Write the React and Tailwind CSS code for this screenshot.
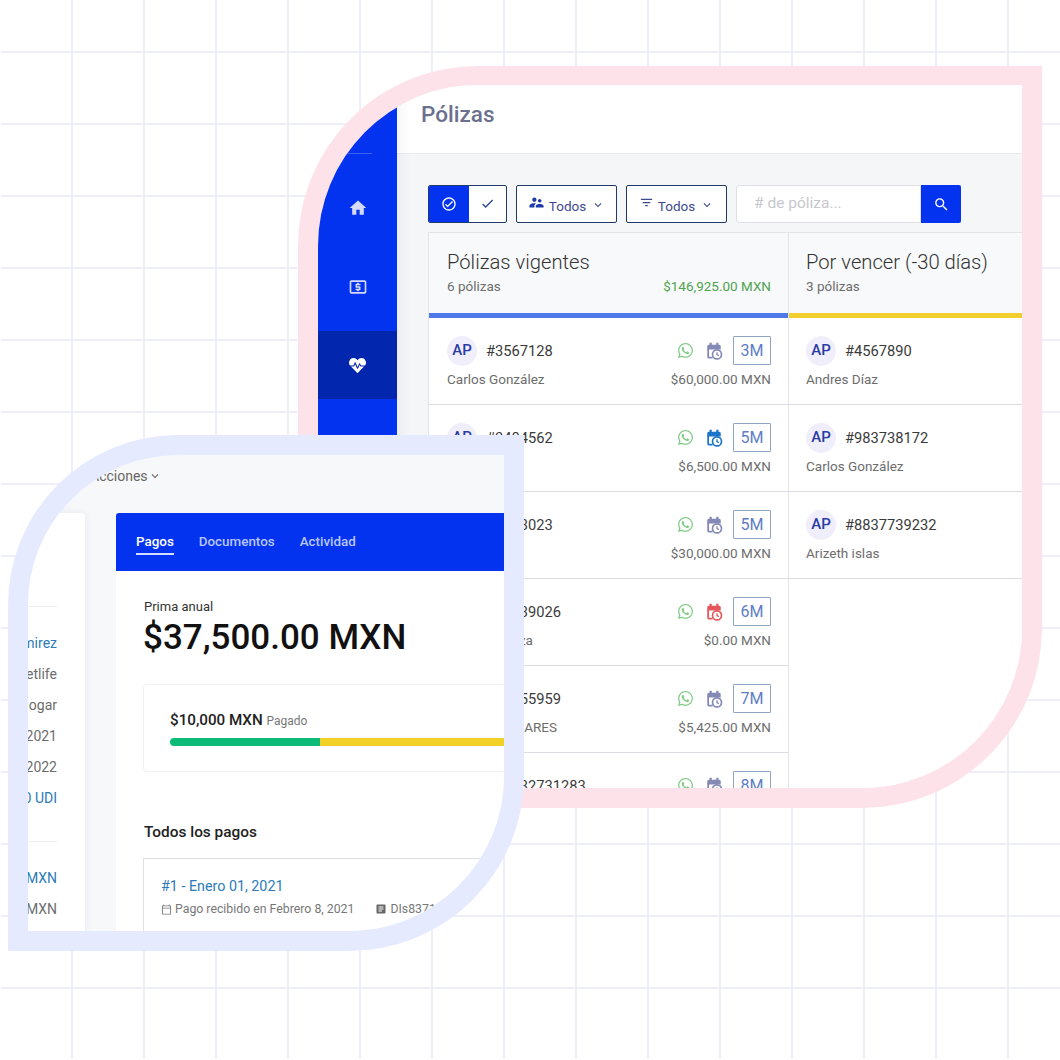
import React from 'react';
import { FaHeartbeat, FaWhatsapp } from 'react-icons/fa';
import {
  MdArticle,
  MdCheck,
  MdFilterList,
  MdHome,
  MdKeyboardArrowDown,
  MdLocalAtm,
  MdOutlineCheckCircle,
  MdOutlineCalendarToday,
  MdSearch,
  MdSupervisorAccount,
} from 'react-icons/md';

const vigentes = [
  { id: '#3567128', name: 'Carlos González', amount: '$60,000.00 MXN', term: '3M', cal: 'text-[#8489b6]' },
  { id: '#3484562', name: 'Juan Pérez', amount: '$6,500.00 MXN', term: '5M', cal: 'text-[#1c74c9]' },
  { id: '#3453023', name: 'Ana Torres', amount: '$30,000.00 MXN', term: '5M', cal: 'text-[#8489b6]' },
  { id: '#12339026', name: 'María Esparza', amount: '$0.00 MXN', term: '6M', cal: 'text-[#e4575c]' },
  { id: '#12355959', name: 'ROSA M. LINARES', amount: '$5,425.00 MXN', term: '7M', cal: 'text-[#8489b6]' },
  { id: '#98732731283', name: 'Luis Mora', amount: '$2,000.00 MXN', term: '8M', cal: 'text-[#8489b6]' },
];

const porVencer = [
  { id: '#4567890', name: 'Andres Díaz' },
  { id: '#983738172', name: 'Carlos González' },
  { id: '#8837739232', name: 'Arizeth islas' },
];

const CalendarClockIcon = ({ className }) => (
  <svg className={className} width="18" height="18" viewBox="0 0 24 24" fill="none">
    <path fill="currentColor" d="M6 1h3v2.5h6V1h3v2.5h1a2 2 0 0 1 2 2V10H3V5.500a2 2 0 0 1 2-2h1z" />
    <path stroke="currentColor" strokeWidth="2.400" d="M4.200 9v10.500a1.300 1.300 0 0 0 1.300 1.300H10" />
    <circle cx="16" cy="16.500" r="6" fill="#fff" stroke="currentColor" strokeWidth="2.200" />
    <path stroke="currentColor" strokeWidth="1.700" d="M16 13.500v3.300l2.400 1.300" />
  </svg>
);

const Avatar = () => (
  <span className="flex h-[30px] w-[30px] items-center justify-center rounded-full bg-[#efeefa] text-[15px] font-medium text-[#2a3ba6]">
    AP
  </span>
);

const ToolbarButton = ({ icon, children }) => (
  <button className="flex h-[38px] w-[101px] items-center justify-center rounded-[2px] border border-[#1f3a68] bg-white text-[13.5px] text-[#3d4a8f]">
    <span className="mb-[3px]">{icon}</span>
    <span className="ml-[4px] mt-[4px]">{children}</span>
    <MdKeyboardArrowDown className="ml-[5px] mt-[1px] text-[#3d4a8f]" size={14} />
  </button>
);

const PolicyRow = ({ policy }) => (
  <div className="flex h-[87px] shrink-0 flex-col border-b border-[#dcdde2] pl-[18px] pr-[17px] pt-[18px]">
    <div className="flex h-[29px] items-center">
      <Avatar />
      <span className="ml-[9px] mt-[1px] text-[14.7px] text-[#3a3a3a]">{policy.id}</span>
      <div className="ml-auto flex items-center">
        <FaWhatsapp className="text-[#7fcb85]" size={17} />
        <CalendarClockIcon className={`ml-[11px] ${policy.cal}`} />
        <span className="ml-[10px] flex h-[29px] w-[38px] items-center justify-center rounded-[1px] border border-[#8ea4bf] text-[16px] text-[#5d7dc6]">
          {policy.term}
        </span>
      </div>
    </div>
    <div className="mt-[5px] flex items-center justify-between text-[13.5px] leading-[18px] text-[#6d6d6d]">
      <span>{policy.name}</span>
      <span>{policy.amount}</span>
    </div>
  </div>
);

const ShortRow = ({ policy }) => (
  <div className="flex h-[87px] shrink-0 flex-col border-b border-[#dcdde2] pl-[17px] pt-[18px]">
    <div className="flex h-[29px] items-center">
      <Avatar />
      <span className="ml-[9px] mt-[1px] text-[14.7px] text-[#3a3a3a]">{policy.id}</span>
    </div>
    <div className="mt-[5px] text-[13.5px] leading-[18px] text-[#6d6d6d]">{policy.name}</div>
  </div>
);

const PolizasWindow = () => (
  <div className="absolute left-[298px] top-[66px] flex h-[742px] w-[744px] overflow-hidden rounded-tl-[180px] rounded-br-[180px] border-[20px] border-t-[19px] border-[#fde3e9] bg-white">
    {/* sidebar */}
    <aside className="relative flex w-[79px] shrink-0 flex-col bg-[#0433f0] shadow-[4px_0_12px_rgba(30,40,90,0.05)]">
      <div className="ml-[27px] mt-[68px] h-px w-[27px] bg-[#3d62f5]" />
      <nav className="mt-[19px] flex flex-col gap-[11px] text-[#d5dafc]">
        <div className="flex h-[68px] items-center justify-center pt-[2px]"><MdHome size={20} /></div>
        <div className="flex h-[68px] items-center justify-center pt-[2px]"><MdLocalAtm size={20} /></div>
        <div className="flex h-[68px] items-center justify-center bg-[#0226ad] text-white"><FaHeartbeat size={17} /></div>
      </nav>
    </aside>

    <main className="flex min-w-0 flex-1 flex-col bg-[#f5f6f8]">
      <header className="h-[69px] shrink-0 border-b border-[#e9eaee] bg-white pl-[24px] pt-[13px] text-[22.5px] font-medium leading-[32px] text-[#6c708f]">
        Pólizas
      </header>

      <div className="mt-[31px] flex h-[38px] shrink-0 pl-[31px]">
        <div className="flex h-[38px] w-[79px] overflow-hidden rounded-[2px] border border-[#1f3a68] bg-white">
          <span className="flex w-[40px] items-center justify-center bg-[#0433f0] pb-[1px] text-white"><MdOutlineCheckCircle size={16} /></span>
          <span className="flex flex-1 items-center justify-center pb-[1px] text-[#2c4a86]"><MdCheck size={15} /></span>
        </div>
        <div className="ml-[9px]"><ToolbarButton icon={<MdSupervisorAccount className="text-[#1d3aa8]" size={17} />}>Todos</ToolbarButton></div>
        <div className="ml-[9px]"><ToolbarButton icon={<MdFilterList className="text-[#3d4a8f]" size={15} />}>Todos</ToolbarButton></div>
        <div className="ml-[9px] flex h-[38px] w-[225px]">
          <div className="flex flex-1 items-center rounded-l-[3px] border border-[#dddfe4] bg-white pl-[17px] text-[15.500px] text-[#c6c8cc]">
            # de póliza...
          </div>
          <span className="flex w-[40px] items-center justify-center rounded-r-[2px] bg-[#0433f0] text-white"><MdSearch size={17} /></span>
        </div>
      </div>

      {/* board */}
      <div className="ml-[31px] mt-[9px] flex min-h-0 flex-1">
        <section className="flex w-[360px] shrink-0 flex-col overflow-hidden border-l border-t border-[#e3e4e8] bg-white">
          <div className="h-[80px] shrink-0 bg-[#f8f9fa] pl-[18px] pr-[17px] pt-[16px]">
            <h2 className="text-[20.200px] font-light leading-[26px] text-[#333]">Pólizas vigentes</h2>
            <div className="mt-[3px] flex justify-between text-[13.5px] leading-[16px]">
              <span className="text-[#6d6d6d]">6 pólizas</span>
              <span className="text-[#4fa34f]">$146,925.00 MXN</span>
            </div>
          </div>
          <div className="h-[5px] shrink-0 bg-[#4f78e8]" />
          {vigentes.map((policy) => <PolicyRow key={policy.id} policy={policy} />)}
        </section>
        <section className="flex w-[360px] shrink-0 flex-col overflow-hidden border-l border-t border-[#e3e4e8] bg-white">
          <div className="h-[80px] shrink-0 bg-[#f8f9fa] pl-[17px] pt-[16px]">
            <h2 className="text-[20.200px] font-light leading-[26px] text-[#333]">Por vencer (-30 días)</h2>
            <div className="mt-[3px] text-[13.5px] leading-[16px] text-[#6d6d6d]">3 pólizas</div>
          </div>
          <div className="h-[5px] shrink-0 bg-[#f2cf2f]" />
          {porVencer.map((policy) => <ShortRow key={policy.id} policy={policy} />)}
        </section>
      </div>
    </main>
  </div>
);

const SideValue = ({ children, link }) => (
  <div className={`h-[31px] whitespace-nowrap text-right text-[14px] leading-[31px] ${link ? 'text-[#2b7bb9]' : 'text-[#6d6d6d]'}`}>
    {children}
  </div>
);

const PagosWindow = () => (
  <div className="absolute left-[8px] top-[435px] h-[516px] w-[516px] overflow-hidden rounded-tl-[170px] rounded-br-[175px] border-[20px] border-[#e5eafe] bg-[#f7f8fa]">
    <div className="ml-[62px] flex h-[58px] items-start pt-[12px] text-[14px] leading-[18px] text-[#666]">
      Acciones
      <MdKeyboardArrowDown className="mt-[2px]" size={14} />
    </div>
    <div className="flex h-[418px]">
      {/* policy details, cut by the frame on the left */}
      <div className="ml-[-143px] w-[200px] shrink-0 rounded-tr-[4px] bg-white pr-[28px] pt-[93px] shadow-[0_0_8px_rgba(30,40,90,0.08)]">
        <div className="h-px bg-[#eeeff2]" />
        <div className="mt-[21px]">
          <SideValue link>Juan Ramirez</SideValue>
          <SideValue>Metlife</SideValue>
          <SideValue>Hogar</SideValue>
          <SideValue>Enero 01, 2021</SideValue>
          <SideValue>Enero 01, 2022</SideValue>
          <SideValue link>$1,500.00 UDI</SideValue>
        </div>
        <div className="mt-[27px] h-px bg-[#eeeff2]" />
        <div className="mt-[21px]">
          <SideValue link>$37,500 MXN</SideValue>
          <SideValue>$27,500 MXN</SideValue>
        </div>
      </div>

      <div className="ml-[31px] w-[500px] shrink-0 overflow-hidden rounded-t-[3px] bg-white">
        <nav className="flex h-[58px] items-start bg-[#0433f0] pl-[20px] pt-[20px] text-[13.4px] font-medium leading-[18px] text-[#b9c6fd]">
          <span className="border-b-[2px] border-[#d5dcfe] pb-[2px] text-white">Pagos</span>
          <span className="ml-[25px]">Documentos</span>
          <span className="ml-[25px]">Actividad</span>
        </nav>
        <div className="pl-[27px]">
          <p className="mt-[28px] pl-px text-[13px] leading-[16px] text-[#333]">Prima anual</p>
          <p className="mt-[2px] text-[35px] font-medium leading-[42px] text-[#111]">$37,500.00 MXN</p>

          <div className="mt-[25px] h-[88px] rounded-[4px] border border-[#f0f1f3] pl-[26px] pt-[25px]">
            <p className="text-[15.2px] font-medium leading-[20px] text-[#222]">
              $10,000 MXN <span className="text-[12px] font-normal text-[#777]">Pagado</span>
            </p>
            <div className="mt-[7px] flex h-[8px]">
              <div className="w-[150px] rounded-l-full rounded-r-[2px] bg-[#0cbb78]" />
              <div className="flex-1 bg-[#f3d026]" />
            </div>
          </div>

          <h3 className="mt-[49px] pl-px text-[15.4px] font-medium leading-[22px] text-[#222]">Todos los pagos</h3>

          <div className="mt-[15px] h-[80px] border border-[#dfe0e4] pl-[17px] pt-[17px]">
            <p className="text-[14.3px] leading-[20px] text-[#2b7bb9]">#1 - Enero 01, 2021</p>
            <div className="mt-[4px] flex items-center text-[12.3px] leading-[18px] text-[#777]">
              <MdOutlineCalendarToday size={11} />
              <span className="ml-[3px]">Pago recibido en Febrero 8, 2021</span>
              <MdArticle className="ml-[21px] text-[#666]" size={12} />
              <span className="ml-[3px]">DIs83712</span>
            </div>
          </div>
        </div>
      </div>
    </div>
  </div>
);

const App = () => (
  <div className="relative h-[1060px] w-[1060px] overflow-hidden bg-white [font-family:Roboto,sans-serif]">
    {/* grid paper behind the two windows */}
    <div className="absolute bottom-[1px] left-[1px] right-0 top-0 bg-[linear-gradient(to_right,#efeff9_2px,transparent_2px),linear-gradient(to_bottom,#efeff9_2px,transparent_2px)] bg-[size:72px_72px] bg-[position:70px_51px]" />
    <PolizasWindow />
    <PagosWindow />
  </div>
);

export default App;
